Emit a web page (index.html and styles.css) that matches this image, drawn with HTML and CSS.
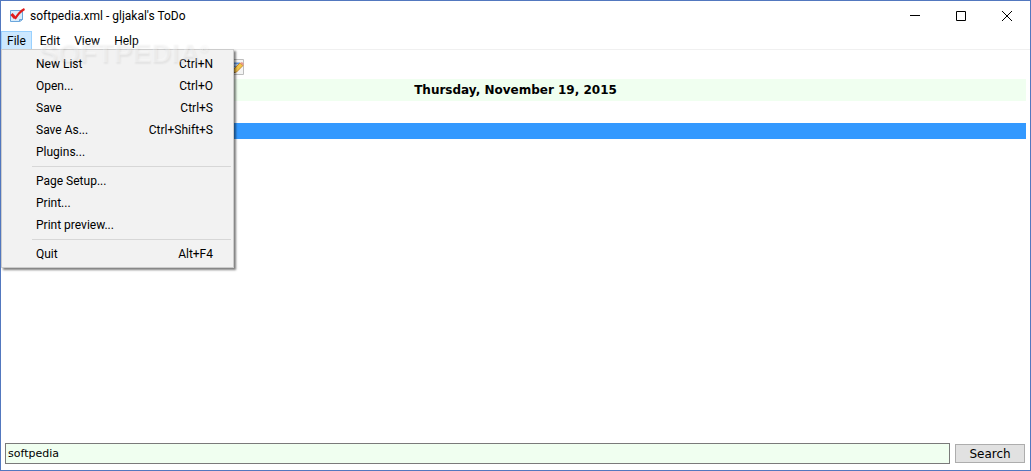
FILE: index.html
```
<!DOCTYPE html>
<html lang="en">
<head>
    <meta charset="UTF-8">
    <meta name="viewport" content="width=device-width, initial-scale=1.0">
    <title>softpedia.xml - gljakal's ToDo</title>
    <link rel="stylesheet" href="styles.css">
</head>
<body>
    <div class="window">
        <header class="titlebar">
            <svg class="app-icon" width="16" height="16" viewBox="0 0 16 16">
                <path d="M1.500 2.500h12v9l-3 2h-9z" fill="#d9ecfb" stroke="#6ba6dc"/>
                <path d="M10.500 13.500v-2h3z" fill="#fff" stroke="#6ba6dc"/>
                <path d="M2.500 6l3.500 4" fill="none" stroke="#e01b1b" stroke-width="3"/>
                <path d="M6 11Q10 4 15.500 1" fill="none" stroke="#e01b1b" stroke-width="2"/>
            </svg>
            <h1>softpedia.xml - gljakal's ToDo</h1>
            <div class="window-buttons">
                <button type="button" aria-label="Minimize">
                    <svg width="10" height="10" viewBox="0 0 10 10"><path d="M0 4.500h10" stroke="#000"/></svg>
                </button>
                <button type="button" aria-label="Maximize">
                    <svg width="10" height="10" viewBox="0 0 10 10"><path d="M.5.5h9v9h-9z" fill="none" stroke="#000"/></svg>
                </button>
                <button type="button" aria-label="Close">
                    <svg width="10" height="10" viewBox="0 0 10 10"><path d="M0 0l10 10M10 0L0 10" stroke="#000"/></svg>
                </button>
            </div>
        </header>

        <nav class="menubar">
            <div class="menu-holder">
                <button type="button" class="menu-title open">File</button>
                <div class="menu">
                    <button type="button" class="menu-item"><span>New List</span><span>Ctrl+N</span></button>
                    <button type="button" class="menu-item"><span>Open...</span><span>Ctrl+O</span></button>
                    <button type="button" class="menu-item"><span>Save</span><span>Ctrl+S</span></button>
                    <button type="button" class="menu-item"><span>Save As...</span><span>Ctrl+Shift+S</span></button>
                    <button type="button" class="menu-item"><span>Plugins...</span></button>
                    <hr>
                    <button type="button" class="menu-item"><span>Page Setup...</span></button>
                    <button type="button" class="menu-item"><span>Print...</span></button>
                    <button type="button" class="menu-item"><span>Print preview...</span></button>
                    <hr>
                    <button type="button" class="menu-item"><span>Quit</span><span>Alt+F4</span></button>
                </div>
            </div>
            <button type="button" class="menu-title">Edit</button>
            <button type="button" class="menu-title">View</button>
            <button type="button" class="menu-title">Help</button>
            <div class="watermark">SOFTPEDIA<sup>®</sup></div>
        </nav>

        <main>
            <div class="toolbar">
                <button type="button" aria-label="Edit note">
                    <svg width="16" height="16" viewBox="0 0 16 16">
                        <path d="M.5.5h15v15H.5z" fill="#f4f4f4" stroke="#bdbdbd"/>
                        <path d="M3 4.500h9M3 7.500h7M3 10.500h4" stroke="#5b8fd6" stroke-width="2"/>
                        <path d="M6 10l6-6 3 2.500-6.500 6.500L5 14z" fill="#f3c64a" stroke="#c98a2e"/>
                        <path d="M12 4l2-1 2 2-1 1.500z" fill="#e69a8e"/>
                        <path d="M5 14l.5-2 1.500 1.500z" fill="#444"/>
                    </svg>
                </button>
            </div>
            <h2 class="date">Thursday, November 19, 2015</h2>
            <div class="todo-list">
                <div class="todo"></div>
                <div class="todo selected"></div>
            </div>
        </main>

        <form class="search">
            <input type="text" name="search" value="softpedia" aria-label="Search text">
            <button type="submit">Search</button>
        </form>
    </div>
</body>
</html>
```
FILE: styles.css
```
* {
    box-sizing: border-box;
}
body {
    margin: 0;
    background-color: #ffffff;
    color: #000000;
    font-family: Roboto, sans-serif;
    font-size: 12px;
}
button {
    padding: 0;
    border: none;
    background: none;
    color: inherit;
    font: inherit;
}
svg {
    display: block;
}
.window {
    display: flex;
    flex-direction: column;
    min-height: 100vh;
    border: 1px solid #5278bf;
}

/* title bar */
.titlebar {
    display: flex;
    align-items: center;
    height: 30px;
    padding-left: 8px;
}
.titlebar h1 {
    flex: 1;
    margin: 0 0 0 5px;
    font-size: 12px;
    font-weight: normal;
}
.window-buttons {
    display: flex;
}
.window-buttons button {
    display: flex;
    align-items: center;
    justify-content: center;
    width: 46px;
    height: 30px;
}

/* menu bar */
.menubar {
    position: relative;
    display: flex;
    gap: 2px;
    height: 19px;
    border-bottom: 1px solid #f0f0f0;
}
.menu-holder {
    position: relative;
}
.menu-title {
    height: 19px;
    padding: 1px 6px 0;
    line-height: 18px;
}
.menu-title.open {
    background-color: #cce8ff;
    box-shadow: inset 0 0 0 1px #99d1ff;
}
.menu {
    position: absolute;
    top: 100%;
    left: 0;
    z-index: 10;
    width: 233px;
    padding: 3px 2px 2px;
    border: 1px solid #cccccc;
    background-color: #f2f2f2;
    box-shadow: 2px 2px 2px rgba(0, 0, 0, 0.5);
}
.menu-item {
    display: flex;
    align-items: center;
    justify-content: space-between;
    width: 100%;
    height: 22px;
    padding: 0 18px 0 32px;
}
.menu hr {
    height: 1px;
    margin: 3px 0 3px 28px;
    border: none;
    background-color: #d7d7d7;
}
.watermark {
    position: absolute;
    top: 6px;
    left: 38px;
    z-index: 20;
    color: rgba(255, 255, 255, 0.3);
    font: bold 28px/32px "Liberation Sans", sans-serif;
    text-shadow: 1px 2px 2px rgba(0, 0, 0, 0.06);
    pointer-events: none;
}
.watermark sup {
    font-size: 12px;
    line-height: 0;
}

/* content */
main {
    flex: 1;
    padding: 0 4px;
}
.toolbar {
    display: flex;
    align-items: center;
    height: 29px;
    padding: 4px 0 0 223px;
}
.date {
    margin: 0;
    background-color: #f0fff0;
    font: bold 12px/22px "DejaVu Sans", sans-serif;
    text-align: center;
}
.todo {
    height: 22px;
}
.todo.selected {
    height: 16px;
    background-color: #3399ff;
}

/* search */
.search {
    display: flex;
    align-items: center;
    gap: 5px;
    padding: 0 5px 6px 4px;
    font: 11px "DejaVu Sans", sans-serif;
}
.search input {
    flex: 1;
    min-width: 0;
    height: 21px;
    padding: 0 2px;
    border: 1px solid #7a7a7a;
    background-color: #f0fff0;
    color: inherit;
    font: inherit;
}
.search button {
    width: 70px;
    height: 19px;
    border: 1px solid #adadad;
    background-color: #e1e1e1;
    font-size: 12px;
}
```
